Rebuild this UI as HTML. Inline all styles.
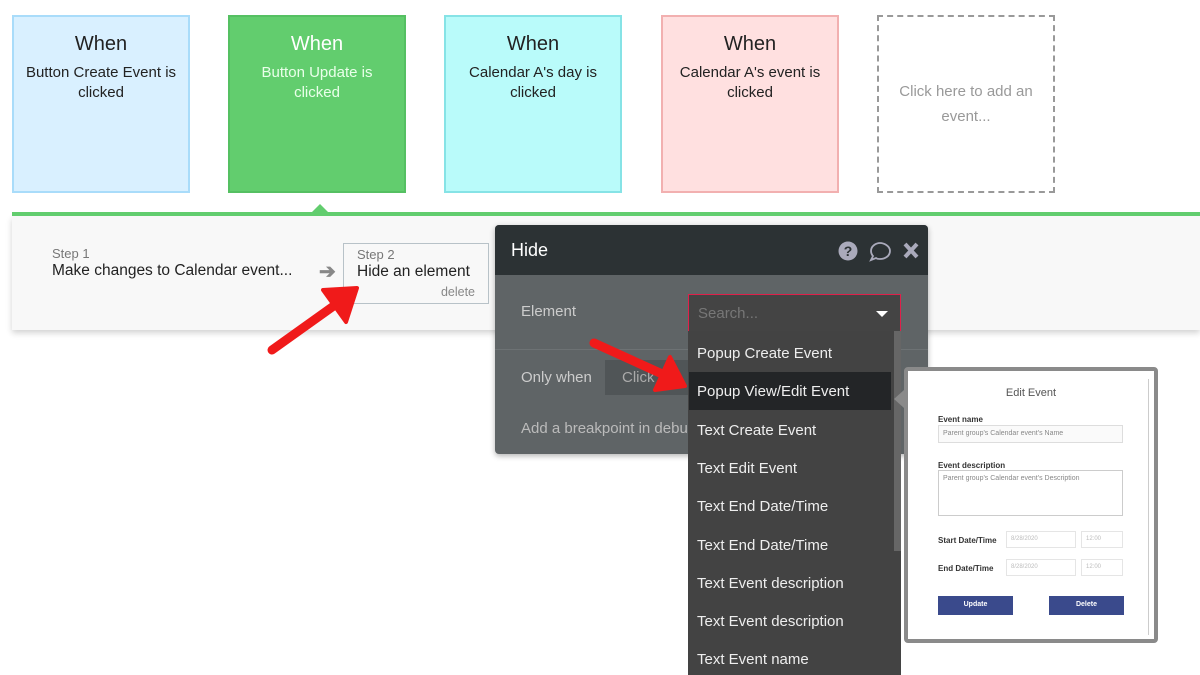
<!DOCTYPE html>
<html><head><meta charset="utf-8"><style>
*{box-sizing:border-box;margin:0;padding:0}
body{width:1200px;height:675px;overflow:hidden;background:#fff;font-family:"Liberation Sans",sans-serif;position:relative}
.card{position:absolute;top:15px;width:178px;height:178px;border:2px solid;text-align:center;color:#222}
.card .w{font-size:20px;margin-top:16px}
.card .t{font-size:15px;line-height:20px;margin-top:7px;padding:0 6px}
.abs{position:absolute}
.dd{position:absolute;left:697px;font-size:15px;color:#eee}
</style></head><body>
<div class="card" style="left:12px;background:#d9f0ff;border-color:#a9dcfa"><div class="w">When</div><div class="t">Button Create Event is clicked</div></div>
<div class="card" style="left:228px;background:#62cd6e;border-color:#55c062;color:#eaffea"><div class="w" style="color:#fff">When</div><div class="t" style="padding:0 22px">Button Update is clicked</div></div>
<div class="card" style="left:444px;background:#b9fbfa;border-color:#86e3e6"><div class="w">When</div><div class="t">Calendar A's day is clicked</div></div>
<div class="card" style="left:661px;background:#ffe0e0;border-color:#f2b0b0"><div class="w">When</div><div class="t">Calendar A's event is clicked</div></div>
<div class="card" style="left:877px;border:2px dashed #999;color:#999"><div class="t" style="margin-top:62px;font-size:15px;line-height:25px">Click here to add an event...</div></div>

<div class="abs" style="left:12px;top:216px;width:1188px;height:114px;background:#f8f8f8;box-shadow:0 3px 6px rgba(0,0,0,.18)"></div>
<div class="abs" style="left:12px;top:212px;width:1188px;height:4px;background:#62cd6e"></div>
<div class="abs" style="left:312px;top:204px;width:0;height:0;border-left:8px solid transparent;border-right:8px solid transparent;border-bottom:8px solid #62cd6e"></div>

<div class="abs" style="left:52px;top:246px;font-size:13px;color:#777">Step 1</div>
<div class="abs" style="left:52px;top:262px;font-size:15.5px;color:#222">Make changes to Calendar event...</div>
<div class="abs" style="left:319px;top:259px;font-size:20px;color:#888;font-weight:bold">➔</div>
<div class="abs" style="left:343px;top:243px;width:146px;height:61px;border:1px solid #b8c2c8;background:#f8f8f8">
<div style="position:absolute;left:13px;top:3px;font-size:13px;color:#777">Step 2</div>
<div style="position:absolute;left:13px;top:19px;font-size:15.5px;color:#222">Hide an element</div>
<div style="position:absolute;right:13px;top:41px;font-size:12.5px;color:#888">delete</div></div>

<div class="abs" style="left:495px;top:225px;width:433px;height:229px;background:#5f6466;border-radius:4px;box-shadow:0 2px 6px rgba(0,0,0,.3);overflow:hidden">
<div style="height:50px;background:#2c3234;color:#fff;font-size:18px;padding:15px 0 0 16px">Hide</div>
<div style="position:absolute;left:0;top:124px;width:100%;height:1px;background:#6d7274"></div>
<div style="position:absolute;left:26px;top:78px;font-size:15px;color:#ccc">Element</div>
<div style="position:absolute;left:26px;top:144px;font-size:15px;color:#ccc">Only when</div>
<div style="position:absolute;left:110px;top:135px;width:90px;height:35px;background:#505557;color:#aaa;font-size:15px;padding:9px 0 0 17px">Click</div>
<div style="position:absolute;left:26px;top:195px;font-size:15px;color:#bbb">Add a breakpoint in debug mode</div>
</div>
<svg class="abs" style="left:838px;top:240px" width="84" height="22" viewBox="0 0 84 22">
<circle cx="10" cy="11" r="9.5" fill="#aab"/><text x="10" y="16" font-size="14" font-weight="bold" text-anchor="middle" fill="#2c3234" font-family="Liberation Sans">?</text>
<path d="M33 11c0-5 5-8 9-8s10 3 10 8-5 8-10 8c-2 0-3 0-4-1l-5 2 2-4c-1-1-2-3-2-5z" fill="none" stroke="#aab" stroke-width="1.8"/>
<path d="M67 4l12 13M79 4L67 17" stroke="#aab" stroke-width="4"/></svg>

<div class="abs" style="left:688px;top:294px;width:213px;height:37px;background:#444;border:1px solid #e0204a;border-bottom:none"></div>
<div class="abs" style="left:698px;top:305px;font-size:15px;color:#777">Search...</div>
<div class="abs" style="left:876px;top:311px;border-left:6px solid transparent;border-right:6px solid transparent;border-top:6px solid #fff"></div>
<div class="abs" style="left:688px;top:331px;width:213px;height:344px;background:#434343"></div>
<div class="abs" style="left:894px;top:331px;width:7px;height:220px;background:#666"></div>
<div class="abs" style="left:689px;top:372px;width:202px;height:38px;background:#232527"></div>
<div class="dd" style="top:345px">Popup Create Event</div>
<div class="dd" style="top:383px">Popup View/Edit Event</div>
<div class="dd" style="top:422px">Text Create Event</div>
<div class="dd" style="top:460px">Text Edit Event</div>
<div class="dd" style="top:498px">Text End Date/Time</div>
<div class="dd" style="top:537px">Text End Date/Time</div>
<div class="dd" style="top:575px">Text Event description</div>
<div class="dd" style="top:613px">Text Event description</div>
<div class="dd" style="top:651px">Text Event name</div>

<div class="abs" style="left:904px;top:367px;width:254px;height:276px;border:4px solid #8a8a8a;border-radius:4px;background:#fff;font-size:8px;color:#333">
<div style="position:absolute;left:0;width:100%;top:16px;text-align:center;font-size:11px;color:#555">Edit Event</div>
<div style="position:absolute;left:30px;top:44px;font-weight:bold;font-size:8px">Event name</div>
<div style="position:absolute;left:30px;top:54px;width:185px;height:18px;border:1px solid #ddd;background:#fafafa;color:#888;font-size:7px;padding:4px">Parent group's Calendar event's Name</div>
<div style="position:absolute;left:30px;top:90px;font-weight:bold">Event description</div>
<div style="position:absolute;left:30px;top:99px;width:185px;height:46px;border:1px solid #ccc;color:#888;font-size:7px;padding:4px">Parent group's Calendar event's Description</div>
<div style="position:absolute;left:30px;top:165px;font-weight:bold">Start Date/Time</div>
<div style="position:absolute;left:98px;top:160px;width:70px;height:17px;border:1px solid #e5e5e5;color:#bbb;font-size:6px;padding:4px">8/28/2020</div>
<div style="position:absolute;left:173px;top:160px;width:42px;height:17px;border:1px solid #e5e5e5;color:#bbb;font-size:6px;padding:4px">12:00</div>
<div style="position:absolute;left:30px;top:193px;font-weight:bold">End Date/Time</div>
<div style="position:absolute;left:98px;top:188px;width:70px;height:17px;border:1px solid #e5e5e5;color:#bbb;font-size:6px;padding:4px">8/28/2020</div>
<div style="position:absolute;left:173px;top:188px;width:42px;height:17px;border:1px solid #e5e5e5;color:#bbb;font-size:6px;padding:4px">12:00</div>
<div style="position:absolute;left:30px;top:225px;width:75px;height:19px;background:#3a4a8c;color:#fff;text-align:center;font-size:7px;padding-top:5px;font-weight:bold">Update</div>
<div style="position:absolute;left:141px;top:225px;width:75px;height:19px;background:#3a4a8c;color:#fff;text-align:center;font-size:7px;padding-top:5px;font-weight:bold">Delete</div>
<div style="position:absolute;left:240px;top:8px;width:1px;height:256px;background:#ccc"></div>
</div>
<div class="abs" style="left:894px;top:390px;border-top:9px solid transparent;border-bottom:9px solid transparent;border-right:10px solid #8a8a8a"></div>

<svg class="abs" style="left:0;top:0" width="1200" height="675">
<line x1="272" y1="350" x2="335" y2="305" stroke="#f01a1a" stroke-width="9" stroke-linecap="round"/>
<polygon points="357,288 323,290 346,322" fill="#f01a1a" stroke="#f01a1a" stroke-width="4" stroke-linejoin="round"/>
<line x1="594" y1="343" x2="660" y2="373" stroke="#f01a1a" stroke-width="9" stroke-linecap="round"/>
<polygon points="685,386 670,357 655,390" fill="#f01a1a" stroke="#f01a1a" stroke-width="4" stroke-linejoin="round"/>
</svg>
</body></html>
